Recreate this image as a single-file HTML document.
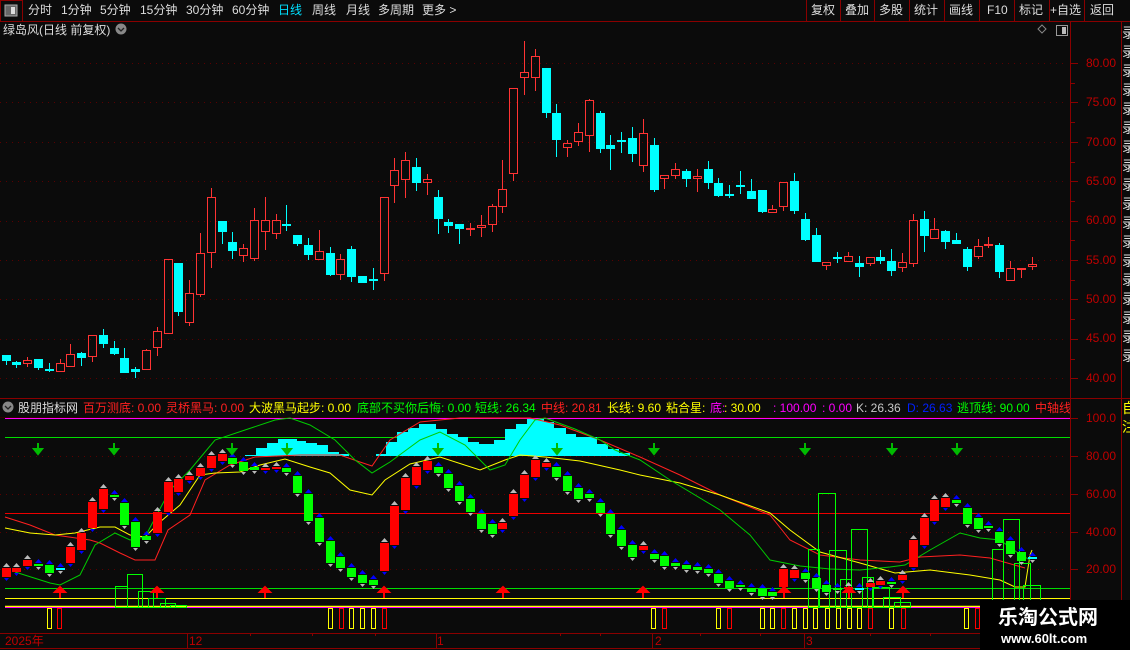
<!DOCTYPE html>
<html><head><meta charset="utf-8">
<style>
*{margin:0;padding:0;box-sizing:border-box}
body{width:1130px;height:650px;background:#0b0b0b;overflow:hidden;position:relative;font-family:"Liberation Sans","Noto Sans CJK SC",sans-serif;font-size:12px;color:#ddd}
.t{position:absolute;white-space:nowrap;line-height:14px}
svg{position:absolute;left:0;top:0}
</style></head><body>
<svg id="s" width="1130" height="650" xmlns="http://www.w3.org/2000/svg"></svg>

<!-- top bar -->
<div class="t" style="left:28px;top:3px">分时</div>
<div class="t" style="left:61px;top:3px">1分钟</div>
<div class="t" style="left:100px;top:3px">5分钟</div>
<div class="t" style="left:140px;top:3px">15分钟</div>
<div class="t" style="left:186px;top:3px">30分钟</div>
<div class="t" style="left:232px;top:3px">60分钟</div>
<div class="t" style="left:278px;top:3px;color:#00e0ff">日线</div>
<div class="t" style="left:312px;top:3px">周线</div>
<div class="t" style="left:346px;top:3px">月线</div>
<div class="t" style="left:378px;top:3px">多周期</div>
<div class="t" style="left:422px;top:3px">更多 &gt;</div>
<div class="t" style="left:811px;top:3px">复权</div>
<div class="t" style="left:845px;top:3px">叠加</div>
<div class="t" style="left:879px;top:3px">多股</div>
<div class="t" style="left:914px;top:3px">统计</div>
<div class="t" style="left:949px;top:3px">画线</div>
<div class="t" style="left:987px;top:3px">F10</div>
<div class="t" style="left:1019px;top:3px">标记</div>
<div class="t" style="left:1050px;top:3px">+自选</div>
<div class="t" style="left:1090px;top:3px">返回</div>

<div class="t" style="left:3px;top:23px">绿岛风(日线 前复权)</div>

<!-- indicator header -->
<div class="t" style="left:18px;top:401px">股朋指标网</div>
<div class="t" style="left:83px;top:401px;color:#ff2020">百万测底: 0.00</div>
<div class="t" style="left:166px;top:401px;color:#ff2020">灵桥黑马: 0.00</div>
<div class="t" style="left:249px;top:401px;color:#ffff00">大波黑马起步: 0.00</div>
<div class="t" style="left:357px;top:401px;color:#00ff00">底部不买你后悔: 0.00</div>
<div class="t" style="left:475px;top:401px;color:#00ff00">短线: 26.34</div>
<div class="t" style="left:541px;top:401px;color:#ff2020">中线: 20.81</div>
<div class="t" style="left:607px;top:401px;color:#ffff00">长线: 9.60</div>
<div class="t" style="left:666px;top:401px;color:#ffff00">粘合星:</div>
<div class="t" style="left:710px;top:401px;color:#ff00ff">底:</div>
<div class="t" style="left:724px;top:401px;color:#ffff00">: 30.00</div>
<div class="t" style="left:773px;top:401px;color:#ff00ff">: 100.00</div>
<div class="t" style="left:822px;top:401px;color:#ff00ff">: 0.00</div>
<div class="t" style="left:856px;top:401px;color:#c8c8c8">K: 26.36</div>
<div class="t" style="left:907px;top:401px;color:#0020ff">D: 26.63</div>
<div class="t" style="left:957px;top:401px;color:#00ff00">逃顶线: 90.00</div>
<div class="t" style="left:1035px;top:401px;color:#ff2020;width:35px;overflow:hidden">中轴线</div>

<!-- price axis -->
<div class="t" style="left:1086px;top:56px;color:#c00000">80.00</div>
<div class="t" style="left:1086px;top:95px;color:#c00000">75.00</div>
<div class="t" style="left:1086px;top:135px;color:#c00000">70.00</div>
<div class="t" style="left:1086px;top:174px;color:#c00000">65.00</div>
<div class="t" style="left:1086px;top:213px;color:#c00000">60.00</div>
<div class="t" style="left:1086px;top:253px;color:#c00000">55.00</div>
<div class="t" style="left:1086px;top:292px;color:#c00000">50.00</div>
<div class="t" style="left:1086px;top:331px;color:#c00000">45.00</div>
<div class="t" style="left:1086px;top:371px;color:#c00000">40.00</div>
<div class="t" style="left:1086px;top:411px;color:#c00000">100.0</div>
<div class="t" style="left:1086px;top:449px;color:#c00000">80.00</div>
<div class="t" style="left:1086px;top:487px;color:#c00000">60.00</div>
<div class="t" style="left:1086px;top:525px;color:#c00000">40.00</div>
<div class="t" style="left:1086px;top:562px;color:#c00000">20.00</div>

<!-- right column chars -->
<div class="t" style="left:1122px;top:24px;width:8px;overflow:hidden;font-size:14px;line-height:19px;color:#ddd;white-space:normal;word-break:break-all">录录录录录录录录录录录录录录录录录录</div>
<div class="t" style="left:1122px;top:399px;width:8px;overflow:hidden;font-size:14px;line-height:19px;color:#ffff00;white-space:normal">自注</div>

<!-- date axis -->
<div class="t" style="left:5px;top:634px;color:#c00000">2025年</div>
<div class="t" style="left:189px;top:634px;color:#c00000">12</div>
<div class="t" style="left:437px;top:634px;color:#c00000">1</div>
<div class="t" style="left:655px;top:634px;color:#c00000">2</div>
<div class="t" style="left:806px;top:634px;color:#c00000">3</div>

<!-- watermark -->
<div style="position:absolute;left:980px;top:600px;width:150px;height:50px;background:#000"></div>
<div class="t" style="left:998px;top:606px;font-size:20px;line-height:24px;font-weight:bold;color:#fff">乐淘公式网</div>
<div class="t" style="left:1001px;top:632px;font-size:13px;font-weight:bold;color:#fff">www.60lt.com</div>

<script>
var S=document.getElementById('s'),h='';
function L(x1,y1,x2,y2,c,w,d){h+='<line x1="'+x1+'" y1="'+y1+'" x2="'+x2+'" y2="'+y2+'" stroke="'+c+'" stroke-width="'+(w||1)+'"'+(d?' stroke-dasharray="'+d+'"':'')+'/>';}
function R(x,y,w,hh,f,s){h+='<rect x="'+x+'" y="'+y+'" width="'+w+'" height="'+hh+'" fill="'+(f||'none')+'"'+(s?' stroke="'+s+'"':'')+'/>';}
function P(pts,c,w,f){h+='<polyline points="'+pts+'" fill="'+(f||'none')+'" stroke="'+c+'" stroke-width="'+(w||1)+'"/>';}
var DR='#8a0000';
// frame
L(0,21.5,1130,21.5,DR);
R(0.5,0.5,22,21,'none',DR);
R(5,5,12,11,'#666','#aaa');R(11,7,4,7,'#ddd');
[806,840,874,909,944,979,1014,1049,1084].forEach(function(x){L(x+.5,0,x+.5,21,DR);});
L(1070.5,22,1070.5,633,DR);L(1121.5,22,1121.5,650,DR);
L(0,398.5,1130,398.5,DR);L(0,417.5,1070,417.5,'#300');
L(0,633.5,1130,633.5,DR);L(0,648.5,1130,648.5,DR);
// icons
h+='<circle cx="121" cy="29" r="5.5" fill="#888"/><path d="M118 28l3 3 3-3" stroke="#222" fill="none" stroke-width="1.3"/>';
h+='<circle cx="8" cy="407" r="5.5" fill="#888"/><path d="M5 406l3 3 3-3" stroke="#222" fill="none" stroke-width="1.3"/>';
h+='<path d="M1042 25l4 4-4 4-4-4z" fill="none" stroke="#888"/>';
R(1056.5,25.5,11,10,'none','#999');R(1062,27,4,7,'#bbb');
// price grid
for(var k=0;k<9;k++){var y=63+k*39.4;L(0,Math.round(y)+.5,1068,Math.round(y)+.5,'#5a0000',1,'1 5');L(1070,Math.round(y)+.5,1078,Math.round(y)+.5,DR);L(1070,Math.round(y+19.7)+.5,1075,Math.round(y+19.7)+.5,DR);}
// indicator grid
[456,494,532,569].forEach(function(y){L(0,y+.5,1068,y+.5,'#5a0000',1,'1 5');});
[418,456,494,532,569].forEach(function(y){L(1070,y+.5,1078,y+.5,DR);});
// date separators
[187,436,652,804].forEach(function(x){L(x+.5,633,x+.5,648,DR);});
[250,312,375,560,600,700,760,870,930,990].forEach(function(x){L(x+.5,633,x+.5,636,DR);});
// candles
var C=[['c',355,361,355,365],['c',362,365,361,368],['r',360,364,357,367],['c',359,368,359,370],['c',369,369,363,372],['r',363,372,359,372],['r',354,367,344,367],['c',353,358,352,366],['r',335,357,335,362],['c',335,344,329,348],['c',348,354,341,355],['c',358,373,348,373],['c',369,372,367,378],['r',350,370,349,370],['r',331,348,327,356],['r',259,334,259,334],['c',263,312,263,316],['r',293,323,280,326],['r',253,295,233,297],['r',197,253,188,268],['c',221,232,221,244],['c',242,251,232,259],['r',248,256,244,262],['r',220,259,208,261],['r',220,232,197,250],['r',220,234,214,239],['c',224,224,205,231],['c',235,244,235,246],['c',245,255,238,260],['r',251,260,230,260],['c',253,275,247,276],['r',259,275,254,280],['c',249,277,246,282],['c',276,283,276,283],['c',279,279,268,290],['r',197,274,197,281],['r',170,186,158,203],['r',160,180,152,198],['c',167,183,158,191],['r',179,183,174,195],['c',197,219,190,234],['c',222,226,219,233],['c',224,229,224,244],['r',228,230,223,236],['r',225,228,215,237],['r',206,225,204,232],['r',189,207,160,213],['r',88,174,88,181],['r',72,78,41,95],['r',56,78,49,91],['c',68,113,68,118],['c',113,140,104,157],['r',143,148,140,157],['r',132,142,123,146],['r',100,136,99,152],['c',113,149,111,153],['c',145,149,135,170],['c',140,140,132,153],['c',138,154,127,162],['r',133,166,119,172],['c',145,190,138,192],['r',175,179,175,189],['r',169,176,163,179],['c',171,179,169,187],['r',176,179,169,192],['c',169,183,161,189],['c',183,196,178,197],['c',194,194,185,198],['c',185,186,171,194],['c',191,199,179,199],['c',190,212,190,213],['r',209,213,205,213],['r',182,207,182,211],['c',181,211,173,214],['c',219,240,213,241],['c',235,262,228,262],['r',262,266,262,270],['c',257,257,252,263],['r',256,262,252,262],['c',263,267,256,277],['r',257,264,257,266],['c',257,261,250,264],['c',261,271,249,276],['r',262,268,253,272],['r',220,264,214,267],['c',219,236,211,252],['r',229,239,218,239],['c',231,242,230,249],['c',240,244,233,244],['c',249,267,247,271],['r',246,257,239,259],['r',244,246,237,248],['c',245,272,243,278],['r',268,281,261,281],['r',268,269,268,278],['r',264,267,257,270]];
function X(i){return Math.round(5.5+i*10.8);}
C.forEach(function(c,i){var x=X(i),t=c[1],b=c[2];
 if(c[0]=='r'){var col='#ff3333';L(x+.5,c[3],x+.5,t,col);L(x+.5,b,x+.5,c[4],col);
   if(b-t<2){R(x-4,t,9,2,col);}else R(x-3.5,t+.5,8,b-t-1,'none',col);}
 else{var col='#00ffff';L(x+.5,c[3],x+.5,c[4],col);R(x-4,t,9,Math.max(2,b-t),col);}
});
// indicator lines
L(5,418.5,1070,418.5,'#ff00ff');
L(5,437.5,1070,437.5,'#00dd00');
L(5,513.5,1070,513.5,'#ee0000');
L(5,588.5,1070,588.5,'#00dd00');
L(5,598.5,1070,598.5,'#ffff00');
L(5,606.5,1070,606.5,'#ffff00',1.5);L(5,607.5,1070,607.5,'#ff00ff');
// cyan histogram
function hist(a,base){var s='';for(var j=0;j<a.length-1;j++){s+='<rect x="'+a[j][0]+'" y="'+a[j][1]+'" width="'+(a[j+1][0]-a[j][0])+'" height="'+(base-a[j][1])+'" fill="#00ffff"/>';}h+=s;}
hist([[245,455],[256,448],[267,443],[278,439],[297,441],[306,443],[317,445],[328,452],[339,454],[349,0]],456);
hist([[376,454],[386,442],[397,432],[408,428],[419,424],[436,429],[447,434],[458,437],[468,442],[479,444],[494,440],[505,429],[516,424],[527,419],[544,422],[554,428],[566,434],[576,437],[597,444],[608,449],[619,453],[630,0]],456);
// curves
P('5,517 30,525 55,535 90,540 100,543 120,553 135,560 155,560 168,530 190,515 205,480 230,465 255,457 300,455 340,455 360,462 372,466 390,440 420,422 460,418 530,418 560,425 600,440 640,457 680,475 720,495 770,515 790,540 820,555 860,560 900,562 920,557 960,555 990,558 1025,568','#ff2020');
P('5,528 30,533 55,535 75,533 100,527 115,527 130,535 145,537 160,522 180,505 200,475 215,473 240,472 260,465 285,459 310,467 330,473 350,490 372,495 385,480 410,464 440,457 480,470 505,460 520,455 545,457 580,461 620,470 640,475 680,483 720,495 770,513 790,530 820,552 860,563 895,573 930,570 970,575 1000,580 1015,587 1025,587 1030,555 1032,550','#ffff00');
P('15,572 50,583 60,585 80,575 95,545 115,533 130,540 145,537 170,490 190,470 215,440 245,430 275,420 290,418 310,425 335,440 355,460 372,473 390,462 420,440 440,432 465,445 490,470 505,465 520,440 535,420 545,418 575,429 600,440 615,450 640,460 670,480 720,510 750,535 770,560 800,566 830,569 860,570 890,567 905,565 930,550 960,533 980,538 1000,540 1018,553 1030,560','#00cc00');
// green step boxes
[[115,127,586],[127,142,574],[138,153,591],[148,165,598],[160,175,603],[170,186,605],[808,819,549],[818,835,493],[829,846,550],[840,851,579],[851,867,529],[862,873,577],[872,889,587],[883,900,597],[894,910,602],[992,1003,549],[1003,1019,519],[1014,1030,563],[1023,1040,585]].forEach(function(b){R(b[0]+.5,b[2]+.5,b[1]-b[0],607-b[2],'none','#00ff00');});
// indicator candles
var I=[['r',568,577],['r',568,572],['r',560,566],['g',564,566],['g',565,573],['b',568,569],['r',547,563],['r',533,550],['r',502,528],['r',489,509],['g',495,497],['g',503,525],['g',522,547],['g',536,540],['r',512,533],['r',482,512],['r',479,492],['r',476,480],['r',468,476],['r',456,468],['r',454,461],['g',458,464],['g',462,471],['g',467,470],['r',468,470],['r',467,469],['g',468,472],['g',476,493],['g',494,521],['g',518,542],['g',541,563],['g',557,568],['g',568,577],['g',575,583],['g',580,585],['r',543,571],['r',506,545],['r',478,510],['r',467,485],['r',461,470],['g',467,473],['g',474,488],['g',486,501],['g',499,512],['g',514,529],['g',524,534],['r',523,529],['r',494,516],['r',475,498],['r',460,477],['r',463,467],['g',467,477],['g',476,491],['g',488,499],['g',494,498],['g',503,513],['g',514,534],['g',530,546],['g',545,557],['r',546,550],['g',554,559],['g',556,566],['g',563,566],['g',565,569],['g',567,570],['g',569,573],['g',574,583],['g',581,588],['g',585,587],['g',588,592],['g',589,596],['g',592,596],['r',569,587],['r',570,578],['g',573,579],['g',578,588],['g',585,592],['g',588,590],['r',587,589],['b',588,589],['r',583,587],['r',581,585],['g',582,584],['r',575,580],['r',540,567],['r',518,545],['r',500,521],['r',498,507],['g',500,503],['g',508,524],['g',518,529],['g',526,528],['g',532,543],['g',541,554],['g',552,561],['b',557,558]];
I.forEach(function(c,i){var x=X(i),t=c[1],b=Math.max(c[2],c[1]+2);
 var col=c[0]=='r'?'#ff0000':(c[0]=='g'?'#00ff00':'#00ffff');
 var up=c[0]=='r'?'#bbb':'#0000ff',dn=c[0]=='r'?'#0000ff':'#bbb';
 h+='<path d="M'+(x-3)+' '+(t-1)+'L'+(x+.5)+' '+(t-5)+'L'+(x+4)+' '+(t-1)+'Z" fill="'+up+'"/>';
 h+='<path d="M'+(x-2)+' '+(b+1)+'L'+(x+.5)+' '+(b+4)+'L'+(x+3)+' '+(b+1)+'Z" fill="'+dn+'"/>';
 R(x-4,t,9,b-t,col);
});
// arrows
[38,114,232,287,438,557,654,805,892,957].forEach(function(x){h+='<path d="M'+x+' 443v7M'+(x-4)+' 449l4 5 4-5z" stroke="#00bb00" stroke-width="2" fill="#00bb00"/>';});
[60,157,265,384,503,643,784,849,903].forEach(function(x){h+='<path d="M'+x+' 598v-7M'+(x-5)+' 592l5-5 5 5z" stroke="#ff0000" stroke-width="2" fill="#ff0000"/>';});
// signal boxes
[['y',47],['r',57],['y',328],['r',339],['y',349],['y',360],['y',371],['r',382],['y',651],['r',662],['y',716],['r',727],['y',760],['y',770],['r',781],['y',792],['y',803],['y',813],['y',825],['y',836],['y',847],['y',857],['r',868],['y',889],['r',901],['y',964],['r',975]].forEach(function(b){R(b[1]+.5,608.5,4,20,'none',b[0]=='y'?'#ffff00':'#ff0000');});
S.innerHTML=h;
</script>
</body></html>
